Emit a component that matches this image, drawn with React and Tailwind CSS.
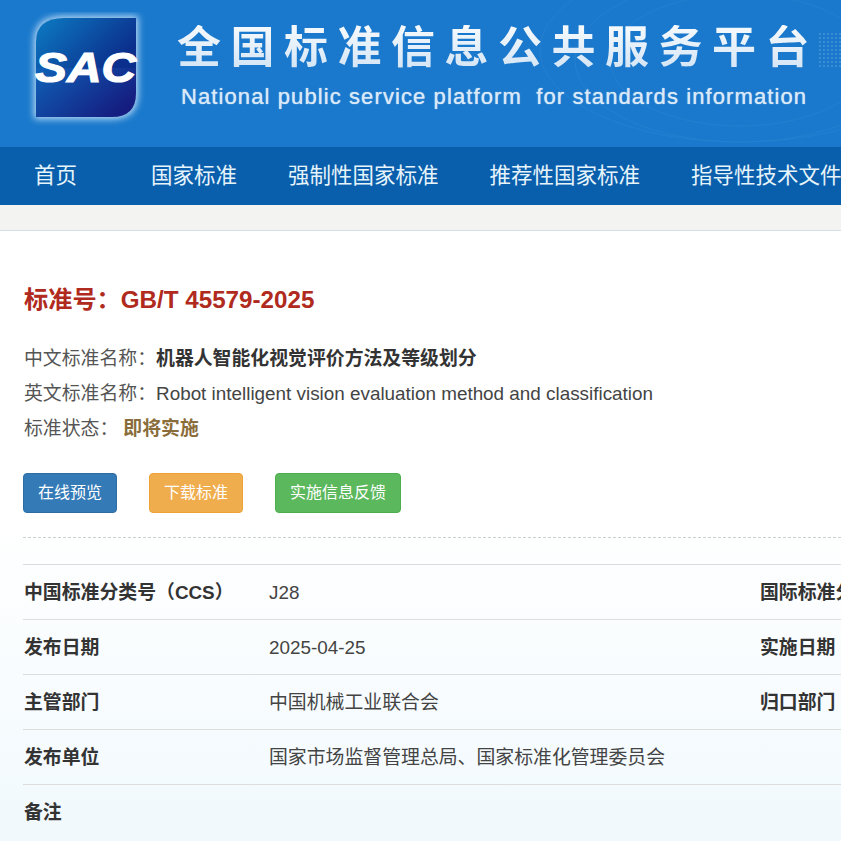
const cjk = "font-['Liberation_Sans','Noto_Sans_CJK_SC',sans-serif]";

const navItems = ["国家标准", "强制性国家标准", "推荐性国家标准", "指导性技术文件"];

const rows = [
  { label: "中国标准分类号（CCS）", value: "J28", label2: "国际标准分类号（ICS）" },
  { label: "发布日期", value: "2025-04-25", label2: "实施日期" },
  { label: "主管部门", value: "中国机械工业联合会", label2: "归口部门" },
  { label: "发布单位", value: "国家市场监督管理总局、国家标准化管理委员会" },
  { label: "备注", value: "" },
];

function Logo() {
  return (
    <svg width="124" height="124" viewBox="0 0 124 124" className="shrink-0">
      <defs>
        <linearGradient id="logoTop" x1="0" y1="0" x2="1" y2="0.5">
          <stop offset="0" stopColor="#0c7cc4" />
          <stop offset="1" stopColor="#0b2f8c" />
        </linearGradient>
        <linearGradient id="logoBottom" x1="0" y1="0" x2="1" y2="0.6">
          <stop offset="0" stopColor="#0f62b8" />
          <stop offset="1" stopColor="#151d80" />
        </linearGradient>
        <filter id="logoGlow" x="-20%" y="-20%" width="140%" height="140%">
          <feGaussianBlur stdDeviation="3.5" />
        </filter>
        <clipPath id="logoClip">
          <path d="M40 6H112V81Q112 105 88 105H12V30Q12 6 40 6Z" />
        </clipPath>
      </defs>
      <path d="M40 6H112V81Q112 105 88 105H12V30Q12 6 40 6Z" fill="#e4f3ff" stroke="#e4f3ff" strokeWidth="4" opacity="0.8" filter="url(#logoGlow)" />
      <g clipPath="url(#logoClip)">
        <rect x="12" y="6" width="100" height="50" fill="url(#logoTop)" />
        <rect x="12" y="56" width="100" height="50" fill="url(#logoBottom)" />
      </g>
      <text
        x="11"
        y="70"
        fill="#ffffff"
        fontFamily="Liberation Sans"
        fontWeight="700"
        fontStyle="italic"
        fontSize="42"
        textLength="101"
        lengthAdjust="spacingAndGlyphs"
        stroke="#ffffff"
        strokeWidth="1.2"
      >
        SAC
      </text>
    </svg>
  );
}

function HeaderDecor() {
  return (
    <svg className="absolute inset-0 pointer-events-none" width="841" height="147" viewBox="0 0 841 147" fill="none">
      <g stroke="#5aa5e3" strokeWidth="1" opacity="0.14">
        <ellipse cx="740" cy="60" rx="130" ry="66" />
        <ellipse cx="740" cy="60" rx="165" ry="82" />
        <ellipse cx="740" cy="50" rx="200" ry="92" />
      </g>
      <g fill="#8cc4f0" opacity="0.35">
        {Array.from({ length: 9 }).map((_, r) =>
          Array.from({ length: 7 }).map((_, c) => (
            <circle key={`${r}-${c}`} cx={820 + c * 4} cy={34 + r * 4} r="1" />
          ))
        )}
      </g>
    </svg>
  );
}

function ActionButton({ className, children }) {
  return (
    <a className={`flex h-10 items-center justify-center rounded-[4px] border px-[14px] text-[16px] text-white ${className}`}>
      {children}
    </a>
  );
}

export default function App() {
  return (
    <div className={`h-[841px] w-[841px] overflow-hidden bg-linear-to-b from-white from-[62%] to-[#f1f9fd] text-[#333] ${cjk}`}>
      {/* Banner */}
      <header className="relative flex h-[147px] bg-[#1a79cc] pl-[24px] pt-[12px]">
        <HeaderDecor />
        <Logo />
        <div className="relative ml-[29px] pt-[13px]">
          <h1 className="whitespace-nowrap bg-linear-to-b from-[#f6fafd] to-[#d3e4f5] bg-clip-text text-[44px] font-semibold leading-[46px] tracking-[9.5px] text-transparent">
            全国标准信息公共服务平台
          </h1>
          <p className="ml-[4px] mt-[13px] whitespace-pre text-[22px] leading-[26px] tracking-[1.1px] text-[#d9e9f8] [text-shadow:0_0_1px_#d9e9f8]">
            National public service platform  for standards information
          </p>
        </div>
      </header>

      {/* Nav */}
      <nav className="flex h-[58px] items-center gap-[51px] whitespace-nowrap bg-[#0a5fac] pl-[34px] text-[21.5px] text-[#e6f4fb]">
        <a className="mr-[23px]">首页</a>
        {navItems.map((item) => (
          <a key={item}>{item}</a>
        ))}
      </nav>
      <div className="h-[26px] border-b border-[#d3dfe8] bg-[#f3f3f1]" />

      {/* Standard details */}
      <main className="pl-[23px]">
        <h2 className="ml-px mt-[53px] text-[24.2px] font-bold leading-[32px] text-[#b02a20]">
          标准号：GB/T 45579-2025
        </h2>

        <div className="ml-px mt-[25px] text-[18.86px] leading-[35px] text-[#555]">
          <p>
            中文标准名称：<span className="font-bold text-[#333]">机器人智能化视觉评价方法及等级划分</span>
          </p>
          <p>
            英文标准名称：<span className="text-[#444]">Robot intelligent vision evaluation method and classification</span>
          </p>
          <p>
            标准状态：<span className="ml-[5px] font-bold text-[#8a6d3b]">即将实施</span>
          </p>
        </div>

        <div className="mt-[27px] flex gap-[32px]">
          <ActionButton className="border-[#2e6da4] bg-[#337ab7]">在线预览</ActionButton>
          <ActionButton className="border-[#eea236] bg-[#f0ad4e]">下载标准</ActionButton>
          <ActionButton className="border-[#4cae4c] bg-[#5cb85c]">实施信息反馈</ActionButton>
        </div>

        <div className="mt-[24px] border-t border-dashed border-[#cfcfcf]" />

        <div className="mt-[26px] w-[818px] whitespace-nowrap text-[18.86px]">
          {rows.map((row) => (
            <div key={row.label} className="flex h-[55px] items-center border-t border-[#ddd] pt-[2px]">
              <div className="ml-px w-[245px] shrink-0 font-bold">{row.label}</div>
              <div className="w-[491px] shrink-0 text-[#444]">{row.value}</div>
              {row.label2 && <div className="font-bold">{row.label2}</div>}
            </div>
          ))}
        </div>
      </main>
    </div>
  );
}
